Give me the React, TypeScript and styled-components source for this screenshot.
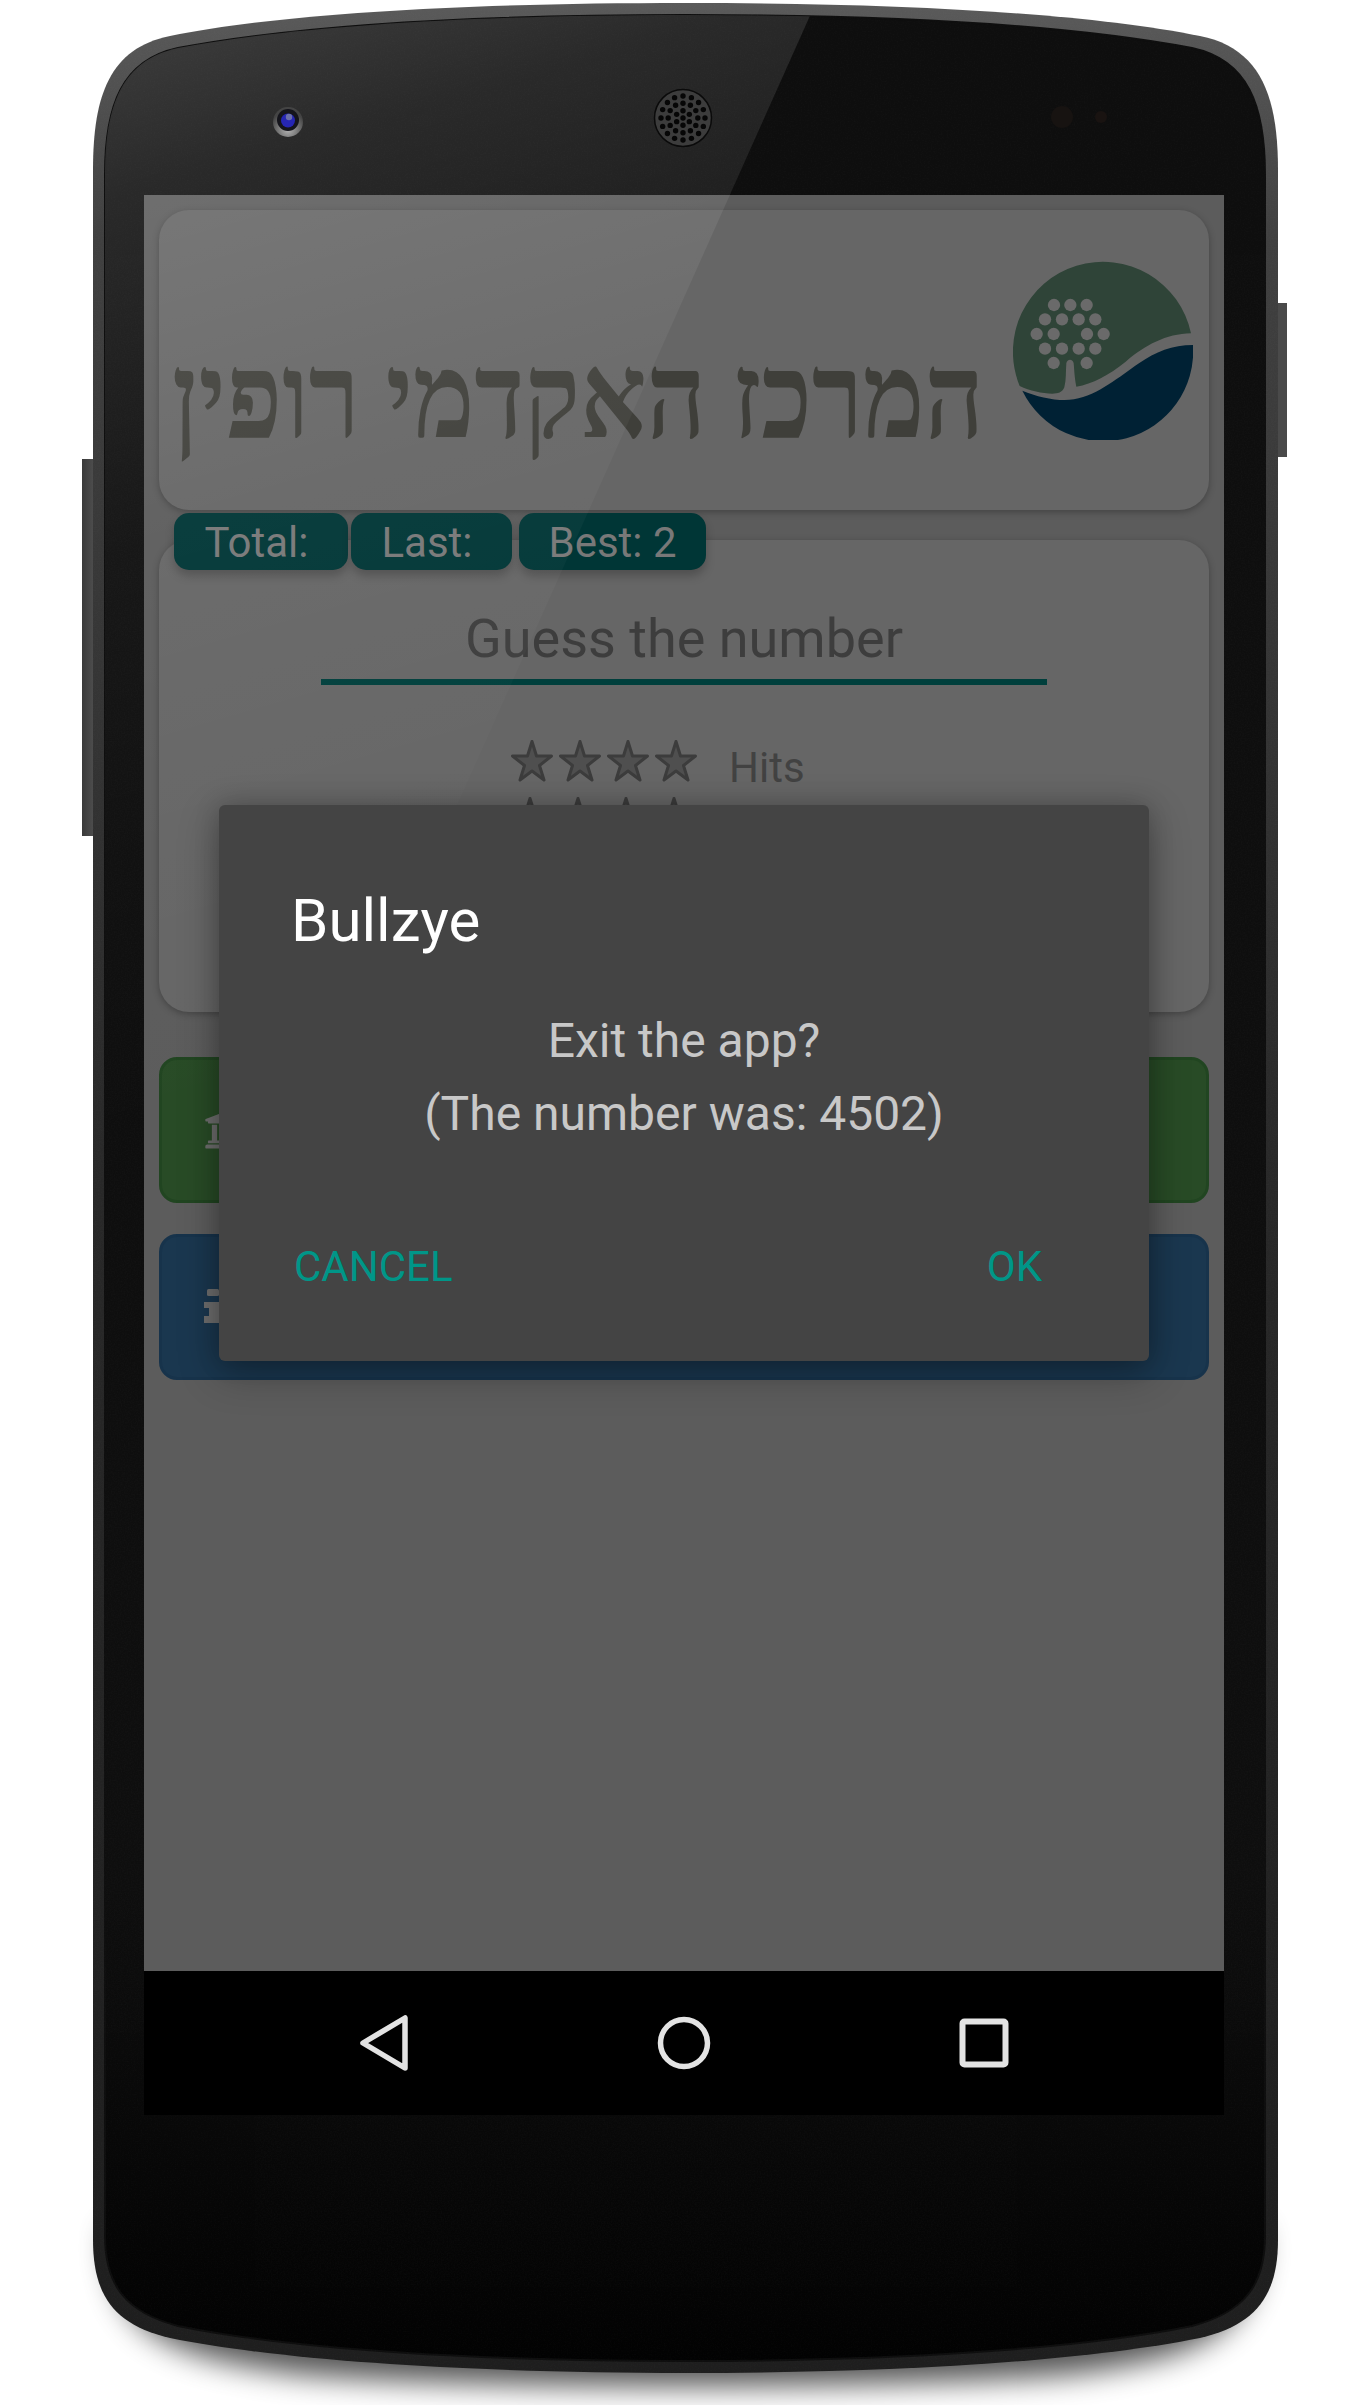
import React from "react";
import styled, { createGlobalStyle } from "styled-components";
import { FaUniversity } from "react-icons/fa";

const Global = createGlobalStyle`
  html, body { margin: 0; padding: 0; background: #fff; }
  body { font-family: Roboto, "Liberation Sans", sans-serif; }
`;

const Frame = styled.div`
  position: relative;
  width: 1370px;
  height: 2405px;
  box-sizing: border-box;
  padding: 195px 146px 290px 144px;
  overflow: hidden;
`;

const Layer = styled.svg<{ $z: number }>`
  position: absolute;
  left: 0;
  top: 0;
  width: 1370px;
  height: 2405px;
  z-index: ${(p) => p.$z};
  pointer-events: none;
`;

const Screen = styled.div`
  position: relative;
  display: flex;
  flex-direction: column;
  width: 1080px;
  height: 1920px;
`;

const Content = styled.main`
  position: relative;
  height: 1776px;
  box-sizing: border-box;
  padding: 15px;
  display: flex;
  flex-direction: column;
  background: #5c5c5c;
`;

const Card = styled.section<{ $h: number }>`
  height: ${(p) => p.$h}px;
  box-sizing: border-box;
  background: #666666;
  border-radius: 30px;
  box-shadow: 0 2px 7px rgba(0, 0, 0, 0.28);
`;

const LogoRow = styled(Card)`
  display: flex;
  align-items: flex-start;
  justify-content: space-between;
  padding: 50px 16px 0 19px;
`;

const HebrewBox = styled.div`
  width: 806px;
  flex: none;
  margin-top: 67px;
`;

const Hebrew = styled.div`
  width: 932px;
  font-family: "Liberation Serif", "DejaVu Serif", serif;
  font-size: 120px;
  font-weight: 700;
  line-height: 140px;
  color: #3f3f3a;
  direction: rtl;
  white-space: nowrap;
  transform: scaleX(0.865);
  transform-origin: left center;
`;

const TabRow = styled.div`
  position: relative;
  z-index: 1;
  display: flex;
  height: 57px;
  margin: 3px 0 -30px 15px;
`;

const Tab = styled.div<{ $gap: number; $w: number; $nudge: number }>`
  width: ${(p) => p.$w}px;
  box-sizing: border-box;
  padding: 2px ${(p) => p.$nudge}px 0 0;
  margin-right: ${(p) => p.$gap}px;
  border-radius: 15px;
  background: #003636;
  color: #787878;
  font-size: 42px;
  line-height: 55px;
  text-align: center;
  box-shadow: 0 6px 10px rgba(0, 0, 0, 0.22);
`;

const GameCard = styled(Card)`
  padding-top: 67px;
  display: flex;
  flex-direction: column;
  align-items: center;
`;

const Guess = styled.div`
  width: 726px;
  height: 72px;
  border-bottom: 6px solid #003f3c;
  color: #3d3d3d;
  font-size: 54px;
  line-height: 63px;
  text-align: center;
`;

const Stars = styled.div<{ $top: number; $shift: number }>`
  display: flex;
  align-items: flex-start;
  align-self: flex-start;
  margin: ${(p) => p.$top}px 0 0 ${(p) => p.$shift}px;
  height: 48px;
`;

const StarIcon = styled.svg`
  width: 48px;
  height: 42px;
  flex: none;
`;

const RowLabel = styled.span`
  margin: 3px 0 0 29px;
  color: #424242;
  font-size: 42px;
  line-height: 50px;
`;

const Action = styled.div<{ $bg: string; $line: string; $top: number }>`
  height: 146px;
  margin-top: ${(p) => p.$top}px;
  box-sizing: border-box;
  padding-left: 42px;
  display: flex;
  align-items: center;
  color: #6e6e6e;
  font-size: 42px;
  background: ${(p) => p.$bg};
  border: 3px solid ${(p) => p.$line};
  border-radius: 18px;
`;

const Dialog = styled.div`
  position: absolute;
  left: 75px;
  top: 610px;
  z-index: 3;
  width: 930px;
  height: 556px;
  box-sizing: border-box;
  padding: 81px 72px 0 72px;
  background: #444444;
  border-radius: 6px;
  box-shadow: 0 12px 40px rgba(0, 0, 0, 0.3), 0 0 24px rgba(0, 0, 0, 0.18);
  display: flex;
  flex-direction: column;
`;

const Title = styled.h2`
  margin: 0;
  color: #ffffff;
  font-size: 60px;
  line-height: 70px;
  font-weight: 400;
`;

const Body = styled.div`
  margin-top: 48px;
  color: #c8c8c8;
  font-size: 48px;
  line-height: 73px;
  text-align: center;
`;

const Buttons = styled.div`
  margin: 92px 35px 0 3px;
  display: flex;
  justify-content: space-between;
  color: #009688;
  font-size: 42px;
  line-height: 50px;
`;

const Nav = styled.nav`
  height: 144px;
  background: #000;
  display: grid;
  grid-template-columns: repeat(3, 300px);
  padding: 0 90px;
  align-items: center;
  justify-items: center;
`;

const NavIcon = styled.svg`
  width: 64px;
  height: 64px;
  display: block;
`;

const InfoGlyph = styled.svg`
  width: 26px;
  height: 34px;
  flex: none;
  margin-top: -2px;
`;

const OUTER =
  "M93 170C93 95 110 48 170 36C290 12 480 3 685 3C890 3 1080 12 1200 36C1260 48 1278 95 1278 170L1278 2240C1278 2295 1256 2325 1200 2338C1080 2362 890 2373 685 2373C480 2373 290 2362 170 2338C114 2325 93 2295 93 2240Z";
const INNER =
  "M105 175C105 105 122 60 178 48C300 25 484 15 685 15C886 15 1070 25 1192 48C1248 60 1265 105 1265 175L1265 2235C1265 2285 1245 2312 1192 2326C1074 2350 886 2361 685 2361C484 2361 296 2350 178 2326C125 2312 105 2285 105 2235Z";

const speakerHoles = (() => {
  const out: { x: number; y: number }[] = [{ x: 0, y: 0 }];
  [[7.3, 6], [14.8, 12], [22, 16]].forEach(([r, n]) => {
    for (let i = 0; i < n; i++) {
      const a = (i / n) * Math.PI * 2 - Math.PI / 2;
      out.push({ x: r * Math.cos(a), y: r * Math.sin(a) });
    }
  });
  return out;
})();

const Shell = () => (
  <Layer $z={0} viewBox="0 0 1370 2405">
    <defs>
      <linearGradient id="rim" x1="0" y1="0" x2="0" y2="1">
        <stop offset="0" stopColor="#5a5a5a" />
        <stop offset="0.1" stopColor="#404040" />
        <stop offset="0.5" stopColor="#282828" />
        <stop offset="1" stopColor="#1e1e1e" />
      </linearGradient>
      <linearGradient id="face" x1="0" y1="0" x2="0" y2="1">
        <stop offset="0" stopColor="#0e0e0e" />
        <stop offset="0.8" stopColor="#0e0e0e" />
        <stop offset="0.92" stopColor="#070707" />
        <stop offset="1" stopColor="#020202" />
      </linearGradient>
      <linearGradient id="side" x1="0" y1="0" x2="1" y2="0">
        <stop offset="0" stopColor="#3a3a3a" />
        <stop offset="1" stopColor="#555" />
      </linearGradient>
      <filter id="blur" x="-10%" y="-50%" width="120%" height="200%">
        <feGaussianBlur stdDeviation="15" />
      </filter>
      <filter id="grain" x="0" y="0" width="100%" height="100%">
        <feTurbulence type="fractalNoise" baseFrequency="0.7" numOctaves="2" seed="4" />
        <feColorMatrix values="0 0 0 0 1  0 0 0 0 1  0 0 0 0 1  0.5 0 0 0 -0.17" />
      </filter>
      <clipPath id="bodyClip">
        <path d={OUTER} />
      </clipPath>
    </defs>
    <path
      d="M110 2230C110 2330 160 2356 300 2374C480 2390 890 2390 1070 2374C1210 2356 1260 2330 1260 2230Z"
      fill="#000"
      opacity="0.68"
      filter="url(#blur)"
    />
    <rect x="82" y="459" width="16" height="377" fill="url(#side)" />
    <rect x="1272" y="303" width="15" height="154" fill="#4a4a4a" />
    <path d={OUTER} fill="url(#rim)" />
    <path d={INNER} fill="url(#face)" stroke="#0e0e0e" strokeWidth="2" />
    <g clipPath="url(#bodyClip)">
      <rect x="90" y="0" width="1190" height="2380" filter="url(#grain)" opacity="0.08" />
    </g>
    <circle cx="1062" cy="117" r="11" fill="#171311" />
    <circle cx="1101" cy="117" r="6" fill="#191311" />
  </Layer>
);

const Glare = () => (
  <Layer $z={2} viewBox="0 0 1370 2405">
    <defs>
      <linearGradient id="glare" gradientUnits="userSpaceOnUse" x1="100" y1="40" x2="400" y2="1080">
        <stop offset="0" stopColor="#fff" stopOpacity="0.19" />
        <stop offset="0.14" stopColor="#fff" stopOpacity="0.115" />
        <stop offset="0.45" stopColor="#fff" stopOpacity="0.04" />
        <stop offset="0.75" stopColor="#fff" stopOpacity="0.012" />
        <stop offset="1" stopColor="#fff" stopOpacity="0" />
      </linearGradient>
      <radialGradient id="camRim" cx="0.5" cy="0.75" r="0.6">
        <stop offset="0" stopColor="#b4b4b4" />
        <stop offset="1" stopColor="#444" />
      </radialGradient>
      <clipPath id="faceClip">
        <path d={INNER} />
      </clipPath>
    </defs>
    <polygon points="817,0 60,0 60,1693" fill="url(#glare)" clipPath="url(#faceClip)" />
    <circle cx="288" cy="122" r="15" fill="url(#camRim)" />
    <circle cx="288" cy="120" r="11" fill="#15151c" />
    <circle cx="288" cy="120.5" r="7" fill="#2626b4" />
    <circle cx="289" cy="117" r="3.2" fill="#7d82a8" opacity="0.8" />
    <circle cx="683" cy="118" r="28.5" fill="#3c3c3c" stroke="#0a0a0a" strokeWidth="1.5" />
    {speakerHoles.map((h, i) => (
      <circle key={i} cx={683 + h.x} cy={118 + h.y} r="2.7" fill="#060606" />
    ))}
  </Layer>
);

const Logo = styled.svg`
  width: 180px;
  height: 180px;
  flex: none;
`;

const DOTS = [
  [285, 225], [334, 225], [383, 225],
  [258, 268], [309, 268], [359, 268], [409, 268],
  [233, 312], [284, 312], [384, 312], [434, 312],
  [258, 356], [309, 356], [359, 356], [409, 356],
  [284, 399], [383, 399],
];

const RuppinLogo = () => (
  <Logo viewBox="162 90 540 540">
    <path
      d="M182 468A270 270 0 1 1 696 310C620 312 560 345 500 395C450 435 400 462 352 470C346 440 346 420 344 400C342 386 324 386 322 400C320 425 322 450 316 472C310 488 296 491 280 491C250 491 212 482 182 468Z"
      fill="#2f4438"
    />
    <path
      d="M190 482C240 503 300 515 345 508C420 495 480 440 540 400C590 365 640 345 702 345A270 270 0 0 1 190 482Z"
      fill="#002134"
    />
    {DOTS.map(([x, y]) => (
      <circle key={`${x}-${y}`} cx={x} cy={y} r="18.5" fill="#6a6a6a" />
    ))}
  </Logo>
);

const Star = () => (
  <StarIcon viewBox="0 0 48 42">
    <path
      d="M24 1.5L28.5 16L43.5 16L31.5 25.5L36 40L24 31L12 40L16.5 25.5L4.5 16L19.5 16Z"
      fill="#4f4f4f"
      stroke="#3c3c3c"
      strokeWidth="3"
      strokeLinejoin="round"
    />
  </StarIcon>
);

export default function App() {
  return (
    <Frame>
      <Global />
      <Shell />
      <Screen>
        <Content>
          <LogoRow $h={300}>
            <HebrewBox>
              <Hebrew>המרכז האקדמי רופין</Hebrew>
            </HebrewBox>
            <RuppinLogo />
          </LogoRow>
          <TabRow>
            <Tab $w={174} $gap={3} $nudge={9}>Total:</Tab>
            <Tab $w={161} $gap={7} $nudge={9}>Last:</Tab>
            <Tab $w={187} $gap={0} $nudge={0}>Best: 2</Tab>
          </TabRow>
          <Card as={GameCard} $h={472}>
            <Guess>Guess the number</Guess>
            <Stars $top={55} $shift={349}>
              <Star /><Star /><Star /><Star />
              <RowLabel>Hits</RowLabel>
            </Stars>
            <Stars $top={9} $shift={347}>
              <Star /><Star /><Star /><Star />
            </Stars>
          </Card>
          <Action $bg="#284b26" $line="#214521" $top={45}>
            <FaUniversity size={42} />
          </Action>
          <Action $bg="#1a374f" $line="#17334b" $top={31}>
            <InfoGlyph viewBox="0 0 26 34">
              <rect x="3" y="0" width="12" height="7" rx="1.5" fill="currentColor" />
              <path d="M0 13H16V27H22V34H0V27H5V19H0Z" fill="currentColor" />
            </InfoGlyph>
          </Action>
          <Dialog>
            <Title>Bullzye</Title>
            <Body>
              Exit the app?
              <br />
              (The number was: 4502)
            </Body>
            <Buttons>
              <span>CANCEL</span>
              <span>OK</span>
            </Buttons>
          </Dialog>
        </Content>
        <Nav>
          <NavIcon viewBox="0 0 64 64">
            <path d="M53 7L53 57L11 32Z" fill="none" stroke="#e3e3e3" strokeWidth="5.5" strokeLinejoin="round" />
          </NavIcon>
          <NavIcon viewBox="0 0 64 64">
            <circle cx="32" cy="32" r="23.5" fill="none" stroke="#e3e3e3" strokeWidth="5.5" />
          </NavIcon>
          <NavIcon viewBox="0 0 64 64">
            <rect x="10.5" y="10.5" width="43" height="43" rx="2" fill="none" stroke="#e3e3e3" strokeWidth="6" />
          </NavIcon>
        </Nav>
      </Screen>
      <Glare />
    </Frame>
  );
}
